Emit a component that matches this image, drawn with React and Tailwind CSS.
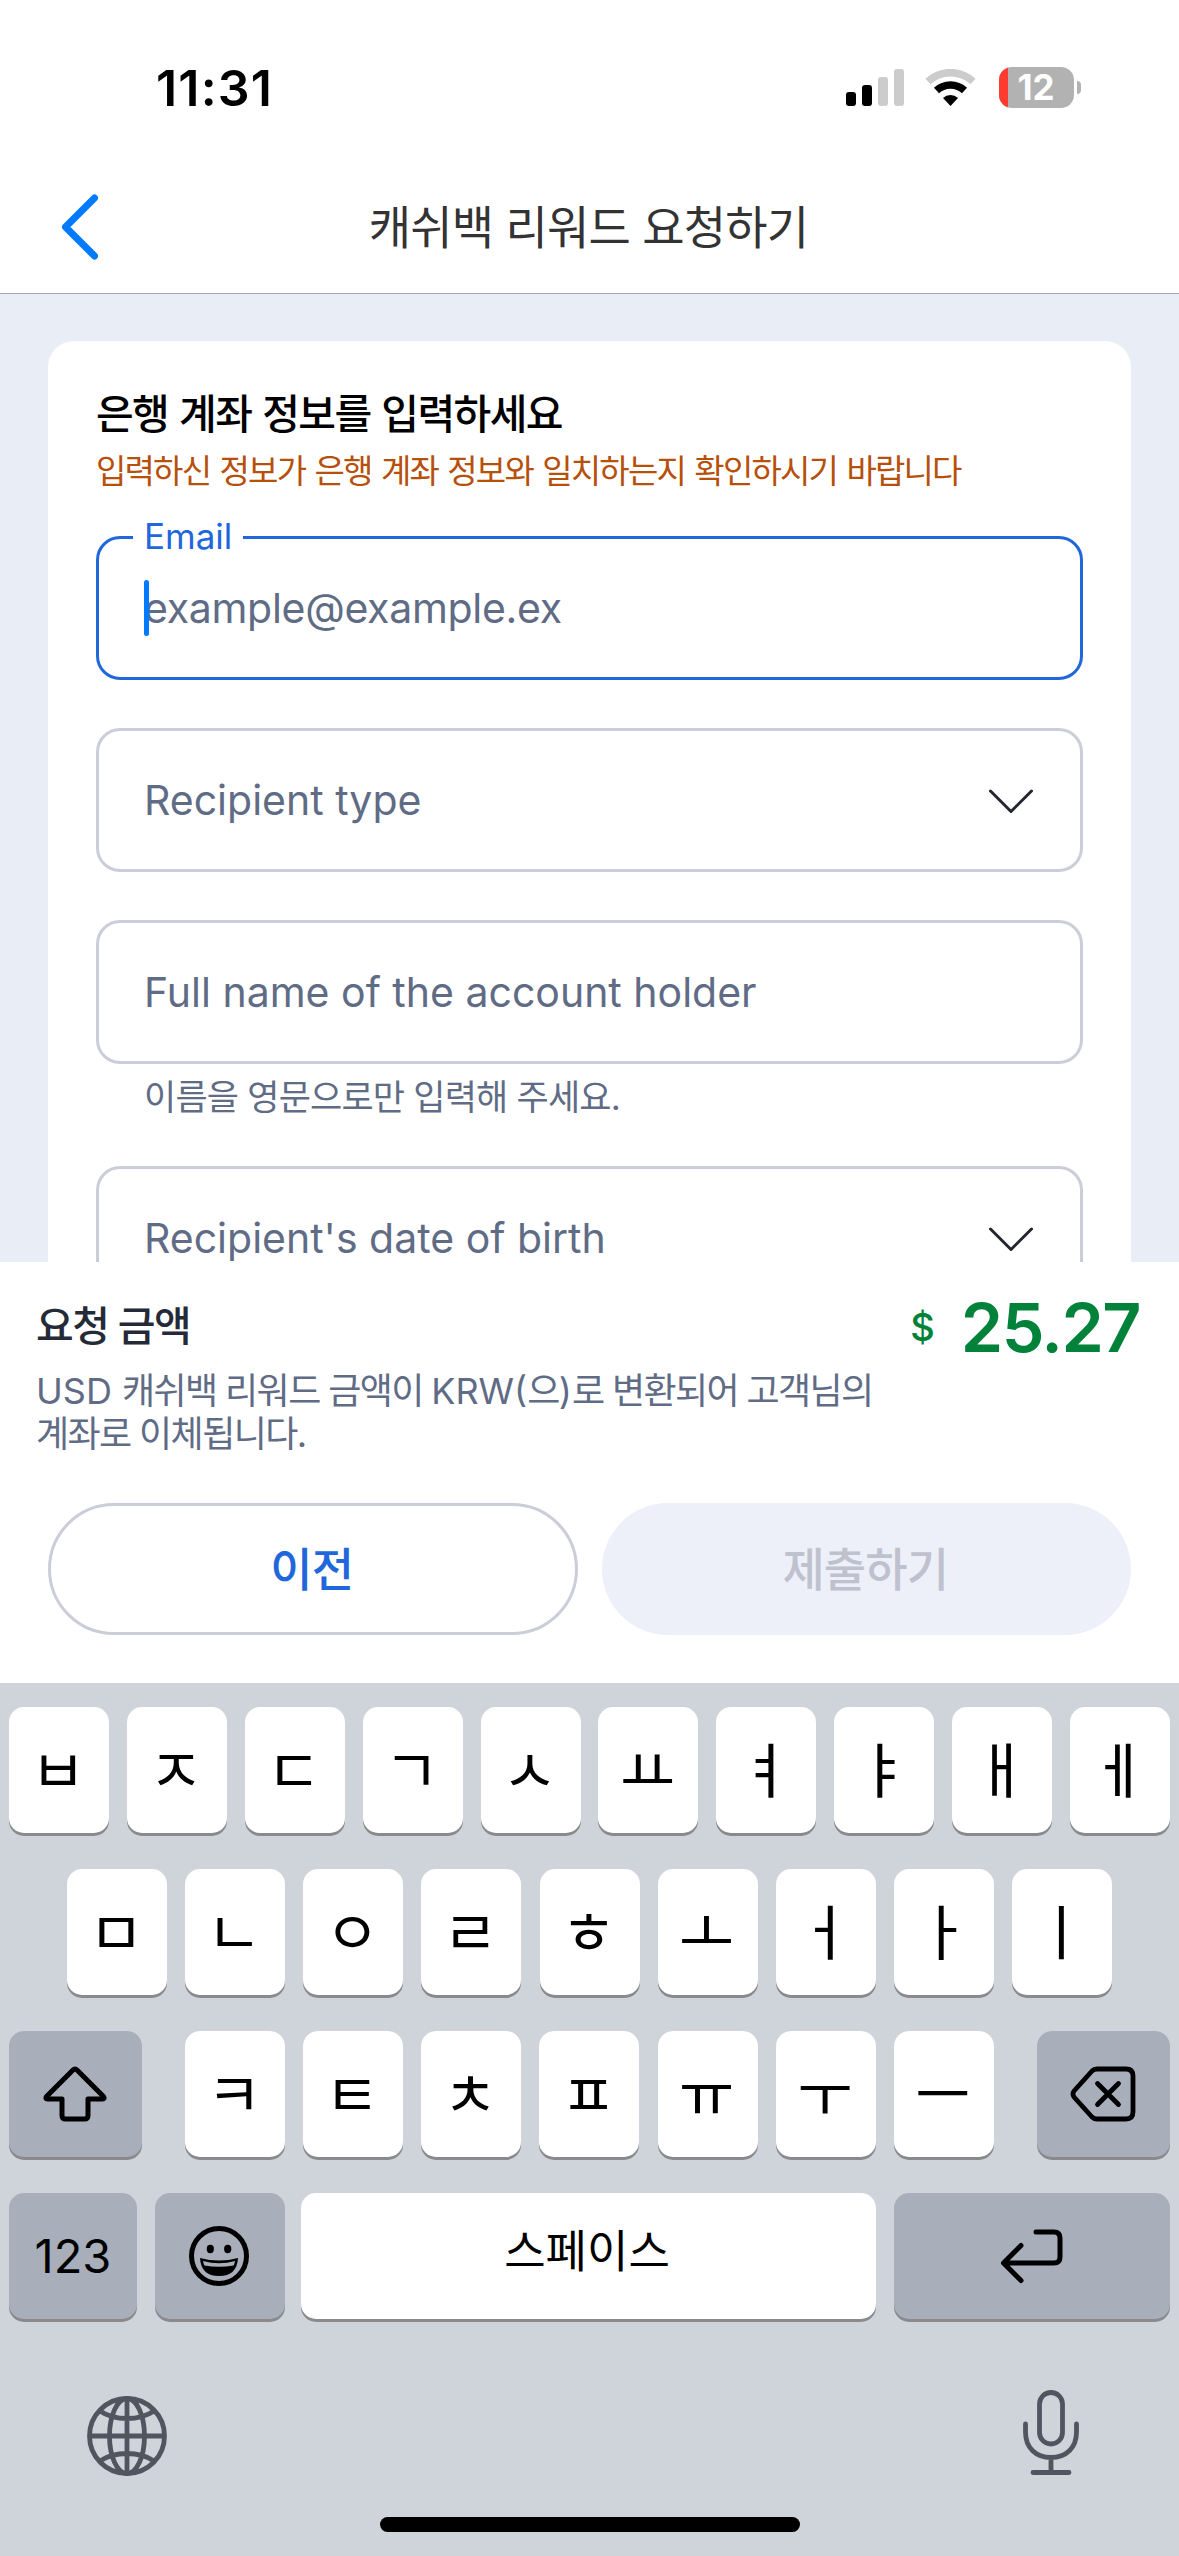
import React from 'react';

const sans = "font-['Inter','Noto_Sans_CJK_KR',sans-serif]";

const SignalIcon = () => (
  <svg width="58" height="37" viewBox="0 0 58 37">
    <rect x="0" y="23" width="10" height="14" rx="3" fill="#000" />
    <rect x="16" y="16" width="10" height="21" rx="3" fill="#000" />
    <rect x="32" y="8" width="10" height="29" rx="3" fill="#ccc" />
    <rect x="48" y="0" width="10" height="37" rx="3" fill="#ccc" />
  </svg>
);

const WifiIcon = () => (
  <svg width="52" height="37" viewBox="0 0 52 37" fill="none">
    <path d="M3 12.5 A33 33 0 0 1 48 12.5" stroke="#ccc" strokeWidth="7.5" />
    <path d="M11.5 21.5 A20.5 20.5 0 0 1 39.5 21.5" stroke="#000" strokeWidth="7.5" />
    <path d="M18 29 A11 11 0 0 1 33 29 L25.5 37 Z" fill="#000" />
  </svg>
);

const Battery = () => (
  <div className="flex items-center gap-[3px]">
    <div className="relative flex h-[41px] w-[75px] items-center justify-center overflow-hidden rounded-[13px] bg-[#b2b2b2]">
      <div className="absolute inset-y-0 left-0 w-[9px] bg-[#ff3b30]" />
      <span className="mr-[1px] text-[35px] leading-none font-bold text-white">12</span>
    </div>
    <div className="h-[13px] w-[4px] rounded-r-full bg-[#b2b2b2]" />
  </div>
);

const StatusBar = () => (
  <div className="flex h-[162px] items-start justify-between pr-[98px] pl-[156px]">
    <span className="mt-[57px] text-[50px] leading-[62px] font-semibold tracking-[1.2px] text-black">11:31</span>
    <div className="mt-[67px] flex items-center">
      <SignalIcon />
      <div className="w-[21px]" />
      <WifiIcon />
      <div className="w-[22px]" />
      <Battery />
    </div>
  </div>
);

const Header = () => (
  <div className="grid h-[132px] grid-cols-[120px_1fr_120px] items-center border-b border-[#a3a7ab] pb-[2px]">
    <svg className="ml-[60px]" width="40" height="68" viewBox="0 0 40 68" fill="none">
      <path d="M34.5 5 L5.5 34 L34.5 63" stroke="#007aff" strokeWidth="7" strokeLinecap="round" strokeLinejoin="round" />
    </svg>
    <h1 className="pr-[2px] text-center text-[46px] leading-none tracking-[-0.8px] text-[#333]">캐쉬백 리워드 요청하기</h1>
  </div>
);

const ChevronDown = () => (
  <svg className="mt-[3px]" width="44" height="25" viewBox="0 0 44 25" fill="none">
    <path d="M1.5 2 L22 22.5 L42.5 2" stroke="#23262f" strokeWidth="3" strokeLinecap="round" strokeLinejoin="round" />
  </svg>
);

const Field = ({ label, select }) => (
  <div className="flex h-[144px] shrink-0 items-center justify-between rounded-[24px] border-[3px] border-[#cbced8] pr-[47px] pl-[45px]">
    <span className="pt-[1px] text-[41px] text-[#606c85]">{label}</span>
    {select && <ChevronDown />}
  </div>
);

const EmailField = () => (
  <div className="relative flex h-[144px] shrink-0 items-center rounded-[24px] border-[3px] border-[#2167dc] pl-[45px]">
    <span className="absolute top-[-25px] left-[34px] bg-white px-[11px] text-[35px] leading-[44px] text-[#2167dc]">Email</span>
    <span className="absolute top-[41px] left-[45px] h-[56px] w-[5px] rounded-full bg-[#007aff]" />
    <span className="pt-[1px] text-[41px] tracking-[-0.3px] text-[#606c85]">example@example.ex</span>
  </div>
);

const Form = () => (
  <div className="h-[968px] overflow-hidden bg-[#e9eef6] px-[48px] pt-[47px]">
    <div className="flex h-[1000px] flex-col rounded-t-[26px] bg-white px-[48px] pt-[44px]">
      <h2 className="text-[41px] leading-[58px] font-medium tracking-[-1.6px] [word-spacing:1.5px] text-black">은행 계좌 정보를 입력하세요</h2>
      <p className="text-[33px] leading-[56px] tracking-[-1.8px] [word-spacing:1.8px] text-[#b6500a]">입력하신 정보가 은행 계좌 정보와 일치하는지 확인하시기 바랍니다</p>
      <div className="mt-[37px] flex flex-col">
        <EmailField />
        <div className="h-[48px]" />
        <Field label="Recipient type" select />
        <div className="h-[48px]" />
        <Field label="Full name of the account holder" />
        <p className="h-[102px] pt-[10px] pl-[48px] text-[35px] leading-[46px] tracking-[-0.8px] text-[#606c85]">이름을 영문으로만 입력해 주세요.</p>
        <Field label="Recipient's date of birth" select />
      </div>
    </div>
  </div>
);

const Summary = () => (
  <div className="h-[421px] bg-white pt-[30px]">
    <div className="flex h-[78px] items-start justify-between pr-[39px] pl-[36px]">
      <span className="mt-[14px] text-[41px] leading-none font-medium tracking-[-1.5px] text-[#242a38]">요청 금액</span>
      <div className="flex items-start text-[#00823b]">
        <span className="mt-[13px] mr-[26px] text-[38px] leading-[44px] font-medium">$</span>
        <span className="mt-px text-[68px] leading-[68px] font-semibold tracking-[-1.5px]">25.27</span>
      </div>
    </div>
    <p className="pl-[36px] text-[36px] leading-[43px] tracking-[-1.6px] text-[#606c85]">
      <span className="tracking-normal">USD </span>캐쉬백 리워드 금액이 <span className="tracking-normal">KRW(</span>으<span className="tracking-normal">)</span>로 변환되어 고객님의<br />계좌로 이체됩니다.
    </p>
    <div className="mt-[47px] grid grid-cols-2 gap-[24px] px-[48px] text-[46px] font-medium tracking-[-0.9px]">
      <button className="h-[132px] rounded-[66px] border-[3px] border-[#cbced8] pr-[2px] text-[#2167dc]">이전</button>
      <button className="h-[132px] rounded-[66px] bg-[#edf0f9] pr-[2px] text-[#bfc1ce]">제출하기</button>
    </div>
  </div>
);

const Key = ({ className = 'w-[100px] bg-white', children }) => (
  <div className={`flex h-[126px] shrink-0 items-center justify-center rounded-[15px] text-black shadow-[0_3px_0_#898a8d] ${className}`}>
    {children}
  </div>
);

const Letter = ({ children }) => (
  <Key>
    <span className="mt-[2px] mr-[2px] text-[60px] leading-none">{children}</span>
  </Key>
);

const ShiftIcon = () => (
  <svg className="mr-[2px]" width="64" height="56" viewBox="0 0 64 56" fill="none" stroke="#000" strokeWidth="5" strokeLinejoin="round">
    <path d="M30 4 Q32 2 34 4 L60.5 30.5 Q62 33 59.5 33 H45 V49.5 Q45 53 41.5 53 H22.5 Q19 53 19 49.5 V33 H4.5 Q2 33 3.5 30.5 Z" />
  </svg>
);

const DeleteIcon = () => (
  <svg className="mr-[1px]" width="66" height="56" viewBox="0 0 66 56" fill="none" stroke="#000" strokeWidth="4.8" strokeLinecap="round" strokeLinejoin="round">
    <path d="M27 3 H56 Q63 3 63 10 V46 Q63 53 56 53 H27 Q24 53 22 51 L4 31 Q2 28 4 25 L22 5 Q24 3 27 3 Z" />
    <path d="M27.5 17.5 L48.5 38.5 M48.5 17.5 L27.5 38.5" />
  </svg>
);

const EmojiIcon = () => (
  <svg className="mr-[2px]" width="60" height="60" viewBox="0 0 60 60">
    <circle cx="30" cy="30" r="27.5" fill="none" stroke="#000" strokeWidth="5" />
    <ellipse cx="21.3" cy="23" rx="3.6" ry="4.2" />
    <ellipse cx="38.7" cy="23" rx="3.6" ry="4.2" />
    <path d="M11 32 Q30 37 49 32 Q48 50 30 50 Q12 50 11 32 Z" />
    <path d="M14 35 Q30 39.5 46 35 Q45.5 38 44.5 39.5 Q30 42 15.5 39.5 Q14.5 38 14 35 Z" fill="#a8afbb" />
  </svg>
);

const ReturnIcon = () => (
  <svg width="64" height="56" viewBox="0 0 64 56" fill="none" stroke="#000" strokeWidth="5" strokeLinecap="round" strokeLinejoin="round">
    <path d="M36 4 H54 Q60 4 60 10 V29 Q60 35 54 35 H4 M21 17.5 L3.5 35 L21 52.5" />
  </svg>
);

const GlobeIcon = () => (
  <svg width="80" height="80" viewBox="0 0 80 80" fill="none" stroke="#50555f" strokeWidth="4.8">
    <circle cx="40" cy="40" r="37.5" />
    <ellipse cx="40" cy="40" rx="17.5" ry="37.5" />
    <path d="M40 2.5 V77.5 M2.5 40 H77.5 M13 15 Q24 22.5 40 22.5 Q56 22.5 67 15 M13 65 Q24 57.5 40 57.5 Q56 57.5 67 65" />
  </svg>
);

const MicIcon = () => (
  <svg width="56" height="86" viewBox="0 0 56 86" fill="none" stroke="#50555f" strokeWidth="4.8" strokeLinecap="round">
    <rect x="16.5" y="2.5" width="23" height="51.5" rx="11.5" />
    <path d="M2.5 34 V42 C2.5 58 13 67.5 28 67.5 S53.5 58 53.5 42 V34 M28 68 V82 M10 82.5 H46" />
  </svg>
);

const row1 = ['ㅂ', 'ㅈ', 'ㄷ', 'ㄱ', 'ㅅ', 'ㅛ', 'ㅕ', 'ㅑ', 'ㅐ', 'ㅔ'];
const row2 = ['ㅁ', 'ㄴ', 'ㅇ', 'ㄹ', 'ㅎ', 'ㅗ', 'ㅓ', 'ㅏ', 'ㅣ'];
const row3 = ['ㅋ', 'ㅌ', 'ㅊ', 'ㅍ', 'ㅠ', 'ㅜ', 'ㅡ'];

const Keyboard = () => (
  <div className="flex h-[873px] flex-col bg-[#cfd3da] pt-[24px]">
    <div className="flex flex-col gap-[36px] px-[9px]">
      <div className="flex justify-between">
        {row1.map((k) => <Letter key={k}>{k}</Letter>)}
      </div>
      <div className="flex justify-between px-[58px]">
        {row2.map((k) => <Letter key={k}>{k}</Letter>)}
      </div>
      <div className="flex">
        <Key className="w-[133px] bg-[#a8afbb]"><ShiftIcon /></Key>
        <div className="flex flex-1 justify-between px-[43px]">
          {row3.map((k) => <Letter key={k}>{k}</Letter>)}
        </div>
        <Key className="w-[133px] bg-[#a8afbb]"><DeleteIcon /></Key>
      </div>
      <div className="flex">
        <Key className="w-[128px] bg-[#a8afbb]"><span className="text-[47px]">123</span></Key>
        <Key className="ml-[18px] w-[130px] bg-[#a8afbb]"><EmojiIcon /></Key>
        <Key className="ml-[16px] w-[575px] bg-white"><span className="-mt-[8px] mr-[3px] text-[45px]">스페이스</span></Key>
        <Key className="ml-[18px] w-[276px] bg-[#a8afbb]"><ReturnIcon /></Key>
      </div>
    </div>
    <div className="mt-[71px] flex items-start justify-between pr-[100px] pl-[87px]">
      <div className="mt-[6px]"><GlobeIcon /></div>
      <MicIcon />
    </div>
    <div className="mx-auto mt-[41px] h-[15px] w-[420px] rounded-full bg-black" />
  </div>
);

export default function App() {
  return (
    <div lang="ko" className={`flex h-[2556px] w-[1179px] flex-col overflow-hidden bg-white ${sans}`}>
      <StatusBar />
      <Header />
      <Form />
      <Summary />
      <Keyboard />
    </div>
  );
}
